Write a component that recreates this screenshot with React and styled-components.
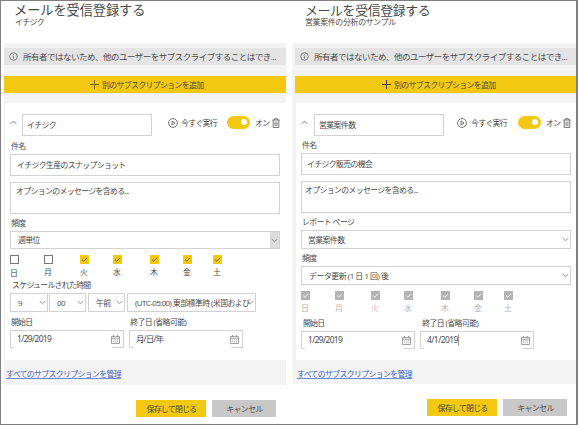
import React from "react";
import styled, { createGlobalStyle } from "styled-components";

const Global = createGlobalStyle`
  body { margin: 0; background: #fff; }
  * { box-sizing: border-box; }
`;

const Frame = styled.div`
  display: flex;
  width: 578px;
  height: 425px;
  border: solid #7f7f7f;
  border-width: 1px 2px 1px 1px;
  background: #fff;
  color: #484848;
  font-family: "Open Sans", "Noto Sans CJK JP", sans-serif;
`;

const Panel = styled.section`
  width: ${(p) => p.$w}px;
  flex: none;
`;

/* $pitch is the advance of one full-width character */
const Text = styled.span`
  display: block;
  flex: none;
  white-space: nowrap;
  font-size: ${(p) => p.$size || 7.9}px;
  letter-spacing: ${(p) => (p.$pitch || 7.3) - (p.$size || 7.9)}px;
  line-height: ${(p) => p.$h || 12}px;
  height: ${(p) => p.$h || 12}px;
  margin-left: ${(p) => p.$ml || 0}px;
  margin-top: ${(p) => p.$mt || 0}px;
  color: ${(p) => p.$color || "inherit"};
`;

const Title = styled(Text)`
  font-family: "Noto Sans CJK JP", sans-serif;
`;

const Header = styled.header`
  height: 42px;
  padding-left: ${(p) => p.$pad}px;
`;

const Body = styled.div`
  height: ${(p) => p.$h}px;
  margin-left: ${(p) => p.$ml}px;
  padding-top: ${(p) => p.$pt}px;
  width: ${(p) => p.$w}px;
  background: #f3f3f3;
  border-left: 1px solid #f8f8f8;
`;

const Banner = styled.div`
  display: flex;
  align-items: center;
  height: 17px;
  margin-left: ${(p) => p.$ml}px;
  padding-left: 5px;
  background: #e4e4e4;
`;

const AddButton = styled.div`
  display: flex;
  align-items: center;
  height: 17px;
  margin: 11px 0 0 ${(p) => p.$ml}px;
  padding-left: ${(p) => p.$pad}px;
  background: #f2c811;
`;

const Card = styled.div`
  height: 257px;
  margin: 10px 0 0 ${(p) => p.$ml}px;
  padding: 11px 0 0 5px;
  background: #fff;
`;

const Row = styled.div`
  display: flex;
  height: ${(p) => p.$h}px;
  margin-top: ${(p) => p.$mt || 0}px;
  padding-left: ${(p) => p.$pl || 0}px;
`;

const Box = styled.div`
  display: flex;
  flex: none;
  align-items: ${(p) => (p.$top ? "flex-start" : "center")};
  justify-content: space-between;
  width: ${(p) => p.$w || 270}px;
  height: ${(p) => p.$h}px;
  margin-top: ${(p) => p.$mt || 0}px;
  margin-left: ${(p) => p.$ml || 0}px;
  padding-left: ${(p) => p.$pad || 6}px;
  padding-top: ${(p) => (p.$top ? 2 : 0)}px;
  overflow: hidden;
  border: 1px solid #d2d2d2;
`;

const Arrow = styled.div`
  display: flex;
  align-items: center;
  justify-content: center;
  flex: none;
  width: 9px;
  height: 100%;
  margin-left: ${(p) => (p.$overlap ? -4 : 0)}px;
  background: ${(p) => (p.$filled ? "#dcdcdc" : "transparent")};
`;

const DateBox = styled.div`
  display: flex;
  flex: none;
  align-items: center;
  justify-content: space-between;
  width: 114px;
  height: 18px;
  margin-right: 5px;
  padding: 0 3px 0 6px;
  border: 1px solid #d2d2d2;
  border-bottom-color: transparent;
  background:
    linear-gradient(#d2d2d2, #d2d2d2) 0 100% / 4px 1px no-repeat border-box,
    linear-gradient(#d2d2d2, #d2d2d2) 100% 100% / 12px 1px no-repeat border-box;
`;

const DateText = styled(Text)`
  font-family: "Noto Sans", "Noto Sans CJK JP", sans-serif;
  font-size: 8.4px;
  letter-spacing: ${(p) => p.$ls}px;
  border-right: 1px solid ${(p) => (p.$cursor ? "#999" : "transparent")};
`;

const Toggle = styled.div`
  flex: none;
  width: 23px;
  height: 13px;
  margin: 2px 0 0 ${(p) => p.$ml}px;
  padding: 3px 3px 0 14px;
  border-radius: 7px;
  background: #f2c811;
  &::after {
    content: "";
    display: block;
    width: 6px;
    height: 6px;
    border-radius: 50%;
    background: #fff;
  }
`;

const Days = styled.div`
  display: grid;
  grid-template-columns: 34px 36px 33px 37px 33px 30px 20px;
  height: ${(p) => p.$h}px;
  margin-top: ${(p) => p.$mt}px;
`;

const Check = styled.div`
  width: 9px;
  height: 9px;
  border: 1px solid ${(p) => (p.$state === "off" ? "#777" : p.$state === "on" ? "#f2c811" : "#b3b3b3")};
  background: ${(p) => (p.$state === "off" ? "#fff" : p.$state === "on" ? "#f2c811" : "#b3b3b3")};
  svg { display: block; }
`;

const Link = styled(Text)`
  width: max-content;
  height: 10px;
  line-height: 10px;
  color: #3b5fc4;
  border-bottom: 1px solid #6f88d2;
`;

const Actions = styled.footer`
  display: flex;
  gap: 6px;
  margin: 15px 0 0 ${(p) => p.$ml}px;
`;

const Button = styled.div`
  display: flex;
  align-items: center;
  justify-content: center;
  width: ${(p) => p.$w}px;
  height: 17px;
  background: ${(p) => p.$bg};
`;

const IconSlot = styled.span`
  display: block;
  flex: none;
  line-height: 0;
  height: 0;
  margin-left: ${(p) => p.$ml || 0}px;
  margin-top: ${(p) => p.$mt || 0}px;
`;

const Svg = ({ w, h, children, color = "#666", sw = 0.9 }) => (
  <svg width={w} height={h} viewBox={`0 0 ${w} ${h}`} fill="none" stroke={color} strokeWidth={sw}>{children}</svg>
);
const Chevron = () => <Svg w={7} h={5} color="#888"><path d="M.7 1 3.5 3.8 6.3 1" /></Svg>;
const Caret = () => <Svg w={7} h={5} color="#777"><path d="M.6 4 3.5 1 6.4 4" /></Svg>;
const Info = () => <Svg w={9} h={9} sw={0.8}><circle cx="4.5" cy="4.5" r="3.8" /><path d="M4.5 4v2.7M4.5 2.3v.9" /></Svg>;
const Plus = ({ color }) => <Svg w={9} h={9} color={color} sw={1}><path d="M4.5 0v9M0 4.5h9" /></Svg>;
const Play = () => <Svg w={10} h={10}><circle cx="5" cy="5" r="4.4" /><path d="M4 3v4l3-2z" /></Svg>;
const Trash = () => <Svg w={8} h={10}><path d="M.3 2h7.4M2.6 2V.7h2.8V2M1.2 2v7.5h5.6V2M3.1 3.6v4.4M4.9 3.6v4.4" /></Svg>;
const Calendar = () => (
  <Svg w={9} h={9} color="#888" sw={0.8}>
    <path d="M.5 1.4h8v7.1h-8zM.5 3.2h8M2.5 0v1.8M6.5 0v1.8" />
    <path d="M2 4.8h5.2M2 6.7h5.2" strokeDasharray="1.2 .7" stroke="#999" />
  </Svg>
);

const notice = "所有者ではないため、他のユーザーをサブスクライブすることはでき...";
const dayNames = ["日", "月", "火", "水", "木", "金", "土"];

function DayPicker({ states, mt, color }) {
  return (
    <>
      <Days $h={9} $mt={mt}>
        {states.map((s, i) => (
          <Check key={i} $state={s}>
            {s !== "off" && (
              <Svg w={7} h={7} color={s === "on" ? "#665a20" : "#fff"}><path d="M1 3.5 2.8 5.2 6.1 1.8" /></Svg>
            )}
          </Check>
        ))}
      </Days>
      <Days $h={12} $mt={2}>
        {dayNames.map((d, i) => <Text key={d} $color={color} $mt={states[i] === "off" && i === 0 ? 1 : 0}>{d}</Text>)}
      </Days>
    </>
  );
}

function Dates({ end, ls, cursor, pad }) {
  return (
    <>
      <Row $h={12} $pl={pad}>
        <Text $pitch={7.1}>開始日</Text>
        <Text $ml={98} $pitch={7.3}>終了日 (省略可能)</Text>
      </Row>
      <Row $h={18} $mt={2}>
        <DateBox><DateText $ls={-0.62}>1/29/2019</DateText><Calendar /></DateBox>
        <DateBox><DateText $ls={ls} $cursor={cursor}>{end}</DateText><Calendar /></DateBox>
      </Row>
    </>
  );
}

function RunRow({ name, gap, nameBoxMl, toggleGap, textGap }) {
  return (
    <Row $h={22}>
      <IconSlot $mt={5}><Caret /></IconSlot>
      <Box $w={130} $h={22} $ml={nameBoxMl} $pad={4}><Text>{name}</Text></Box>
      <IconSlot $ml={gap} $mt={4}><Play /></IconSlot>
      <Text $ml={textGap} $mt={3} $pitch={7.2}>今すぐ実行</Text>
      <Toggle $ml={toggleGap} />
      <Text $ml={5} $mt={3} $pitch={7.2}>オン</Text>
      <IconSlot $ml={3} $mt={4}><Trash /></IconSlot>
    </Row>
  );
}

function Foot({ ml }) {
  return (
    <Actions $ml={ml}>
      <Button $w={70} $bg="#f2c811"><Text $ml={1} $pitch={7.2}>保存して閉じる</Text></Button>
      <Button $w={64} $bg="#c8c8c8"><Text $ml={1} $pitch={7.3}>キャンセル</Text></Button>
    </Actions>
  );
}

export default function App() {
  return (
    <Frame>
      <Global />
      <Panel $w={287}>
        <Header $pad={13}>
          <Title $size={13.2} $pitch={13.15} $h={18}>メールを受信登録する</Title>
          <Text $ml={1} $mt={-2} $h={10}>イチジク</Text>
        </Header>
        <Body $ml={2} $w={283} $h={342} $pt={5}>
          <Banner $ml={0}>
            <Info />
            <Text $ml={5} $size={8.5} $pitch={8}>{notice}</Text>
          </Banner>
          <AddButton $ml={0} $pad={86}>
            <Plus color="#7a6816" />
            <Text $ml={3} $pitch={7.25}>別のサブスクリプションを追加</Text>
          </AddButton>
          <Card $ml={1}>
            <RunRow name="イチジク" nameBoxMl={5} gap={16} textGap={3} toggleGap={10} />
            <Text $ml={1} $mt={4}>件名</Text>
            <Box $h={22} $mt={2}><Text $pitch={7.25}>イチジク生産のスナップショット</Text></Box>
            <Box $h={32} $mt={6} $top $pad={5}><Text $pitch={7.25}>オプションのメッセージを含める...</Text></Box>
            <Text $ml={1} $mt={3}>頻度</Text>
            <Box $h={18} $mt={2} $pad={7}><Text>週単位</Text><Arrow $filled><Chevron /></Arrow></Box>
            <DayPicker mt={6} states={["off", "off", "on", "on", "on", "on", "on"]} />
            <Text $ml={2} $mt={1} $pitch={7.2}>スケジュールされた時間</Text>
            <Row $h={19} $mt={2}>
              <Box $w={38} $h={19} $pad={7}><Text>9</Text><Arrow><Chevron /></Arrow></Box>
              <Box $w={37} $h={19} $ml={1} $pad={7}><Text>00</Text><Arrow><Chevron /></Arrow></Box>
              <Box $w={37} $h={19} $ml={2} $pad={7}><Text>午前</Text><Arrow><Chevron /></Arrow></Box>
              <Box $w={129} $h={19} $ml={2} $pad={7}><Text $pitch={7.35}>(UTC-05:00) 東部標準時 (米国および</Text><Arrow $overlap><Chevron /></Arrow></Box>
            </Row>
            <Row $h={32} $mt={4}><div><Dates end="月/日/年" ls={-0.8} pad={1} /></div></Row>
          </Card>
          <Link $ml={2} $mt={9} $pitch={7.25}>すべてのサブスクリプションを管理</Link>
        </Body>
        <Foot ml={135} />
      </Panel>

      <Panel $w={288}>
        <Header $pad={17}>
          <Title $size={12.9} $pitch={12.55} $h={17}>メールを受信登録する</Title>
          <Text $mt={-1} $h={10} $pitch={7.6}>営業案件の分析のサンプル</Text>
        </Header>
        <Body $ml={4} $w={284} $h={341} $pt={5}>
          <Banner $ml={2}>
            <Info />
            <Text $ml={5} $size={8.5} $pitch={8}>{notice}</Text>
          </Banner>
          <AddButton $ml={2} $pad={87}>
            <Plus color="#403a18" />
            <Text $ml={3} $pitch={7.25}>別のサブスクリプションを追加</Text>
          </AddButton>
          <Card $ml={3}>
            <RunRow name="営業案件数" nameBoxMl={6} gap={13} textGap={4} toggleGap={11} />
            <Text $ml={1} $mt={3}>件名</Text>
            <Box $h={22} $mt={2} $pad={5}><Text $pitch={7.25}>イチジク販売の機会</Text></Box>
            <Box $h={32} $mt={6} $top $pad={3}><Text $pitch={7.25}>オプションのメッセージを含める...</Text></Box>
            <Text $ml={1} $mt={3}>レポート ページ</Text>
            <Box $h={19} $mt={2} $pad={6}><Text>営業案件数</Text><Arrow><Chevron /></Arrow></Box>
            <Text $ml={1} $mt={3}>頻度</Text>
            <Box $h={19} $mt={2} $pad={7}><Text $pitch={7.45}>データ更新 (1 日 1 回) 後</Text><Arrow><Chevron /></Arrow></Box>
            <DayPicker mt={6} color="#b0b0b0" states={Array(7).fill("locked")} />
            <Row $h={32} $mt={3}><div><Dates end="4/1/2019" ls={-0.52} cursor pad={2} /></div></Row>
          </Card>
          <Link $ml={4} $mt={9} $pitch={7.25}>すべてのサブスクリプションを管理</Link>
        </Body>
        <Foot ml={139} />
      </Panel>
    </Frame>
  );
}
